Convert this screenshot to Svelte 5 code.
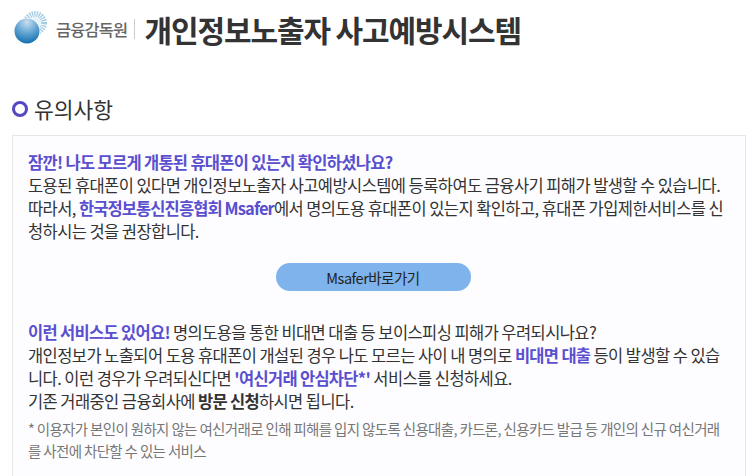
<script>
    const org = '금융감독원';
</script>

<div class="page">
    <header class="top">
        <div class="logo">
            <svg width="34" height="34" viewBox="0 0 34 34">
                <defs>
                    <radialGradient id="ball" cx="0.5" cy="0.15" r="0.9">
                        <stop offset="0" stop-color="#c9dfef" />
                        <stop offset="0.45" stop-color="#6aa9d6" />
                        <stop offset="1" stop-color="#0a69ab" />
                    </radialGradient>
                </defs>
                <circle cx="21" cy="13" r="9" fill="none" stroke="#a4cbe3" stroke-width="6" stroke-dasharray="1.3 1" />
                <circle cx="21" cy="13" r="6" fill="#e8f3f9" />
                <circle cx="13" cy="21" r="13" fill="#fff" />
                <circle cx="13" cy="21" r="12.5" fill="url(#ball)" />
            </svg>
            <span class="org">{org}</span>
        </div>
        <span class="sep"></span>
        <h1>개인정보노출자 사고예방시스템</h1>
    </header>

    <h2 class="heading"><span class="ring"></span>유의사항</h2>

    <section class="box">
        <p>
            <strong class="hl">잠깐! 나도 모르게 개통된 휴대폰이 있는지 확인하셨나요?</strong><br />
            도용된 휴대폰이 있다면 개인정보노출자 사고예방시스템에 등록하여도 금융사기 피해가 발생할 수 있습니다.<br />
            따라서, <strong class="hl tight">한국정보통신진흥협회 Msafer</strong>에서 명의도용 휴대폰이 있는지 확인하고, 휴대폰 가입제한서비스를 신청하시는 것을 권장합니다.
        </p>
        <div class="action"><button type="button">Msafer바로가기</button></div>
        <p>
            <strong class="hl">이런 서비스도 있어요!</strong> 명의도용을 통한 비대면 대출 등 보이스피싱 피해가 우려되시나요?<br />
            개인정보가 노출되어 도용 휴대폰이 개설된 경우 나도 모르는 사이 내 명의로 <strong class="hl">비대면 대출</strong> 등이 발생할 수 있습니다. 이런 경우가 우려되신다면 <strong class="hl">'여신거래 안심차단*'</strong> 서비스를 신청하세요.<br />
            기존 거래중인 금융회사에 <strong>방문 신청</strong>하시면 됩니다.
        </p>
        <p class="note">* 이용자가 본인이 원하지 않는 여신거래로 인해 피해를 입지 않도록 신용대출, 카드론, 신용카드 발급 등 개인의 신규 여신거래를 사전에 차단할 수 있는 서비스</p>
    </section>
</div>

<style>
    :global(body) {
        margin: 0;
        background: #fff;
    }

    .page {
        width: 754px;
        height: 476px;
        overflow: hidden;
        box-sizing: border-box;
        padding: 0 8px 0 12px;
        font-family: "Noto Sans CJK KR", "Noto Sans", sans-serif;
        color: #333;
    }

    .top {
        display: flex;
        align-items: center;
        height: 58px;
        padding-left: 2px;
    }

    .logo {
        display: flex;
        align-items: center;
        gap: 8px;
    }

    .logo svg {
        margin-bottom: 4px;
    }

    .org {
        font-size: 16.4px;
        font-weight: 500;
        letter-spacing: -0.8px;
        color: #666;
    }

    .sep {
        width: 1px;
        height: 20px;
        margin: 0 9px 0 7px;
        background: #ccc;
    }

    h1 {
        margin: 0;
        font-size: 30px;
        font-weight: 700;
        letter-spacing: -1.1px;
        color: #333;
    }

    .heading {
        display: flex;
        align-items: center;
        gap: 6px;
        margin: 36px 0 0;
        font-size: 21.5px;
        font-weight: 400;
        line-height: 30px;
    }

    .ring {
        width: 16px;
        height: 16px;
        box-sizing: border-box;
        border: 3.5px solid #5548c2;
        border-radius: 50%;
    }

    .box {
        margin-top: 11px;
        padding: 15px 20px 30px 15px;
        box-sizing: border-box;
        border: 1px solid #e6e6e6;
        background: #fdfdff;
        font-size: 16.5px;
        line-height: 23px;
        letter-spacing: -0.58px;
    }

    p {
        margin: 0;
    }

    strong {
        font-weight: 700;
        letter-spacing: -0.7px;
    }

    .hl {
        color: #5a4fcf;
    }

    .tight {
        letter-spacing: -0.9px;
    }

    .action {
        display: flex;
        justify-content: center;
        margin: 20px 0 30px;
        padding-right: 7px;
    }

    button {
        width: 195px;
        height: 28px;
        padding: 0;
        border: 0;
        border-radius: 14px;
        background: #7eb3ec;
        font: inherit;
        font-size: 14.5px;
        letter-spacing: -0.5px;
        color: #222;
    }

    .note {
        margin-top: 5px;
        font-size: 14.5px;
        line-height: 22px;
        letter-spacing: -0.65px;
        color: #777;
    }
</style>
